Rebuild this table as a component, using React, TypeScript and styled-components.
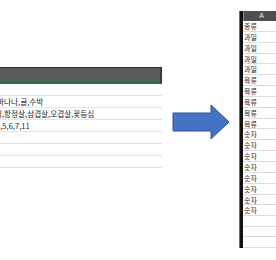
import styled, { createGlobalStyle } from "styled-components";

const GlobalStyle = createGlobalStyle`
  html, body {
    margin: 0;
    padding: 0;
    background: #ffffff;
  }
  body {
    font-family: "Noto Sans CJK KR", "Noto Sans", sans-serif;
  }
`;

const Page = styled.div`
  display: flex;
  align-items: flex-start;
  width: 276px;
  height: 260px;
  overflow: hidden;
`;

const LeftSheet = styled.div`
  flex-shrink: 0;
  width: 162px;
  margin-top: 67px;
  overflow: hidden;
`;

const LeftHeader = styled.div`
  height: 14px;
  background: #5b5b5b;
  border-top: 1px solid #2c2c2c;
  border-right: 2px solid #3a3a3a;
  border-bottom: 2px solid #217346;
`;

const LeftRow = styled.div`
  box-sizing: border-box;
  height: 12px;
  border-bottom: 1px solid #e4e4e4;
  font-size: 7.6px;
  line-height: 11px;
  color: #1e1e1e;
  white-space: nowrap;
`;

const ClippedText = styled.span<{ $shift: number }>`
  display: inline-block;
  margin-left: ${(p) => -p.$shift}px;
`;

const ArrowBox = styled.div`
  flex-shrink: 0;
  margin-left: 10px;
  margin-top: 104px;
  width: 58px;
  height: 36px;
`;

const RightSheet = styled.div`
  flex-shrink: 0;
  display: flex;
  width: 40px;
  height: 237px;
  margin-left: 9px;
  margin-top: 11px;
`;

const RowNumberBar = styled.div`
  width: 4px;
  background: #111111;
  border-left: 1px solid #6a6a6a;
  box-sizing: border-box;
`;

const Column = styled.div`
  flex: 1;
  display: flex;
  flex-direction: column;
`;

const ColumnHeader = styled.div`
  height: 10px;
  background: #4f4f4f;
  border-left: 1px solid #8c8c8c;
  color: #ececec;
  font-family: "Liberation Sans", Arial, sans-serif;
  font-size: 7px;
  line-height: 10px;
  text-align: center;
`;

const Cell = styled.div`
  box-sizing: border-box;
  height: 10.85px;
  padding-left: 1px;
  border-bottom: 1px solid #dcdcdc;
  font-size: 7px;
  line-height: 10px;
  color: #2a2a2a;
  white-space: nowrap;
`;

const leftRows = [
  { text: "", shift: 0 },
  { text: "사과,바나나,귤,수박", shift: 19 },
  { text: "소고기,항정살,삼겹살,오겹살,꽃등심", shift: 19 },
  { text: "1,2,3,4,5,6,7,11", shift: 23 },
  { text: "", shift: 0 },
  { text: "", shift: 0 },
  { text: "", shift: 0 },
];

const rightRows = [
  "종류",
  "과일",
  "과일",
  "과일",
  "과일",
  "육류",
  "육류",
  "육류",
  "육류",
  "육류",
  "숫자",
  "숫자",
  "숫자",
  "숫자",
  "숫자",
  "숫자",
  "숫자",
  "숫자",
  "",
  "",
  "",
];

const Arrow = () => (
  <svg width="58" height="36" viewBox="0 0 58 36">
    <polygon
      points="1,9 39,9 39,1 57,18 39,35 39,27 1,27"
      fill="#4472c4"
      stroke="#2f528f"
      strokeWidth="1"
    />
  </svg>
);

export default function App() {
  return (
    <Page>
      <GlobalStyle />
      <LeftSheet>
        <LeftHeader />
        {leftRows.map((row, i) => (
          <LeftRow key={i}>
            {row.text && (
              <ClippedText $shift={row.shift}>{row.text}</ClippedText>
            )}
          </LeftRow>
        ))}
      </LeftSheet>
      <ArrowBox>
        <Arrow />
      </ArrowBox>
      <RightSheet>
        <RowNumberBar />
        <Column>
          <ColumnHeader>A</ColumnHeader>
          {rightRows.map((text, i) => (
            <Cell key={i}>{text}</Cell>
          ))}
        </Column>
      </RightSheet>
    </Page>
  );
}
